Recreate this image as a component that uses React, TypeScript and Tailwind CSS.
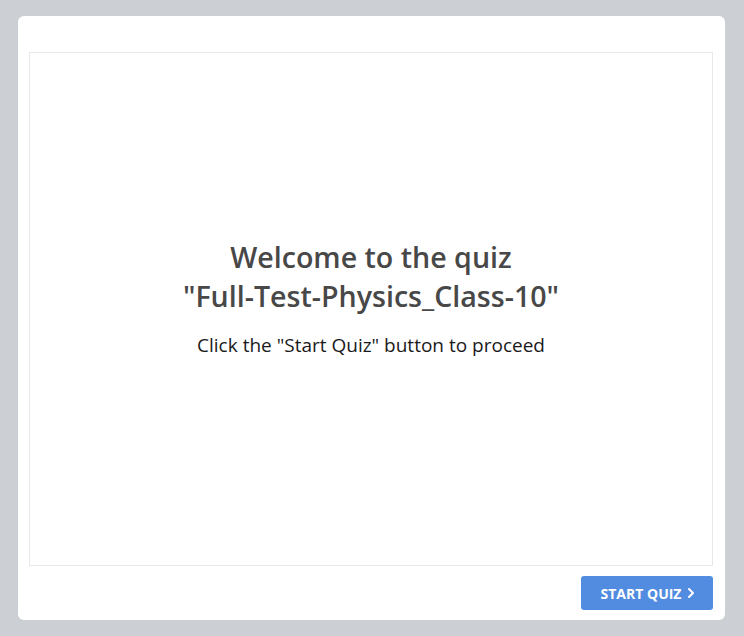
import { ChevronRight } from "lucide-react";

const App = () => {
    return (
        <div className="w-[744px] h-[636px] bg-[#ccd0d4] pt-4 pl-[18px] font-['Open_Sans',sans-serif]">
            <div className="w-[707px] h-[604px] bg-white rounded-md flex flex-col pt-9 pl-[11px] pr-3 pb-[10px]">
                <div className="h-[514px] border border-[#e8e8e8] flex flex-col items-center justify-center pb-[22px]">
                    <h1 className="text-[28.6px] leading-[39px] font-semibold text-[#484848] text-center">
                        Welcome to the quiz
                        <br />
                        "Full-Test-Physics_Class-10"
                    </h1>
                    <p className="mt-[16px] text-[19px] text-[#1a1a1a]">
                        Click the "Start Quiz" button to proceed
                    </p>
                </div>
                <div className="flex justify-end mt-[10px]">
                    <button className="w-[132px] h-[34px] bg-[#528ce0] rounded-[3px] text-white text-[14px] font-bold flex items-center justify-center gap-[2px] pl-[6px]">
                        START QUIZ
                        <ChevronRight size={16} strokeWidth={3} />
                    </button>
                </div>
            </div>
        </div>
    );
};

export default App;
